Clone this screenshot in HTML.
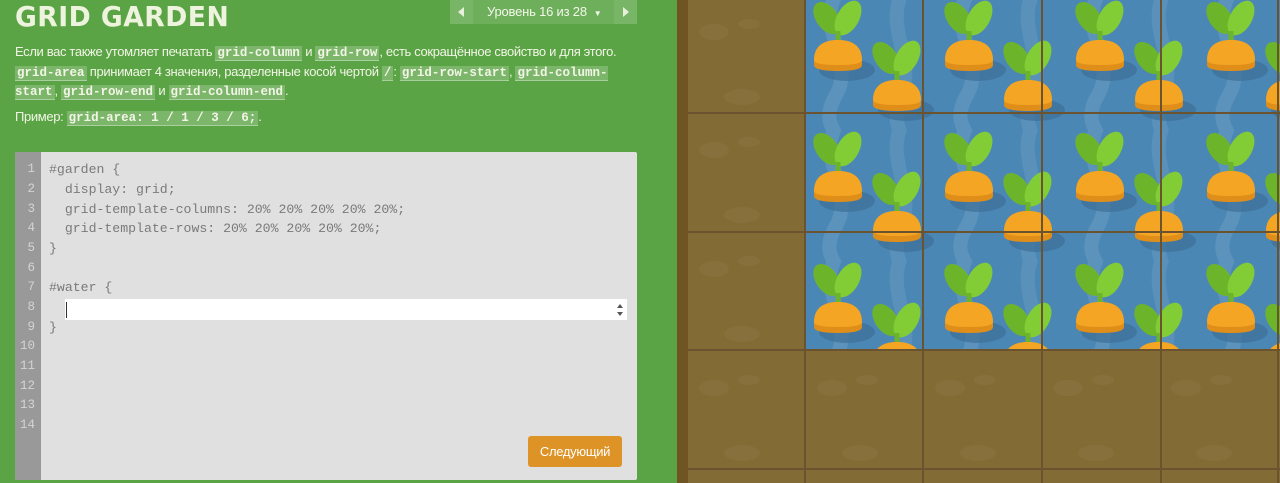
<!DOCTYPE html>
<html><head><meta charset="utf-8"><style>
*{margin:0;padding:0;box-sizing:border-box}
body{width:1280px;height:483px;overflow:hidden;background:#5aa445;position:relative;font-family:"Liberation Sans",sans-serif}
#left{position:absolute;left:0;top:0;width:677px;height:483px;background:#5aa445;color:#f2f5e6}
h1{position:absolute;left:15px;top:0px;font-size:28px;font-weight:bold;letter-spacing:0.5px;color:#eef3de;font-family:"DejaVu Sans","Liberation Sans",sans-serif;transform:scaleX(0.95);transform-origin:left}
#nav{position:absolute;left:450px;top:0;width:187px;height:24px;background:rgba(255,255,255,0.12);font-size:13px;color:#f4f7ea}
#nav .a{position:absolute;top:0;width:23px;height:24px;background:rgba(255,255,255,0.08)}
#nav .t{position:absolute;left:37px;top:4px;letter-spacing:-0.2px}
p{position:absolute;left:15px;font-size:13px;line-height:18.5px;letter-spacing:-0.35px;width:615px}
code{font-family:"Liberation Mono",monospace;font-weight:bold;font-size:12.5px;background:rgba(255,255,255,0.2);padding:0 2px;border-bottom:1px solid rgba(255,255,255,0.35);letter-spacing:0}
#ed{position:absolute;left:15px;top:152px;width:622px;height:328px;background:#e0e0e0;border-radius:2px;overflow:hidden}
#gut{position:absolute;left:0;top:0;width:26px;height:100%;background:#999}
.ln{position:absolute;font-family:"Liberation Mono",monospace;font-size:12.5px;color:#d4d4d4;width:20px;text-align:right;left:0}
.cd{position:absolute;left:34px;font-family:"Liberation Mono",monospace;font-size:13.2px;color:#7a7a7a;white-space:pre}
#inp{position:absolute;left:50px;top:147px;width:562px;height:21px;background:#fff}
#btn{position:absolute;left:513px;top:284px;width:94px;height:31px;background:#dd9326;border-radius:3px;color:#fff;font-size:13px;text-align:center;line-height:31px;letter-spacing:-0.3px}
</style></head><body>
<div id="left">
<h1>GRID GARDEN</h1>
<div id="nav"><div class="a" style="left:0"><svg width="23" height="24"><path d="M14 7 L8 12 L14 17Z" fill="#e8efda"/></svg></div><span class="t">Уровень 16 из 28 &nbsp;<span style="font-size:8px">▼</span></span><div class="a" style="right:0"><svg width="23" height="24"><path d="M9 7 L15 12 L9 17Z" fill="#e8efda"/></svg></div></div>
<p style="top:43px">Если вас также утомляет печатать <code>grid-column</code> и <code>grid-row</code>, есть сокращённое свойство и для этого. <code>grid-area</code> принимает 4 значения, разделенные косой чертой <code>/</code>: <code>grid-row-start</code>, <code>grid-column-start</code>, <code>grid-row-end</code> и <code>grid-column-end</code>.</p>
<p style="top:108px">Пример: <code>grid-area: 1 / 1 / 3 / 6;</code>.</p>
<div id="ed"><div id="gut"></div>
<div class="ln" style="top:10px">1</div><div class="ln" style="top:30px">2</div><div class="ln" style="top:50px">3</div><div class="ln" style="top:69px">4</div><div class="ln" style="top:89px">5</div><div class="ln" style="top:109px">6</div><div class="ln" style="top:128px">7</div><div class="ln" style="top:148px">8</div><div class="ln" style="top:168px">9</div><div class="ln" style="top:187px">10</div><div class="ln" style="top:207px">11</div><div class="ln" style="top:227px">12</div><div class="ln" style="top:246px">13</div><div class="ln" style="top:266px">14</div>
<div class="cd" style="top:10px">#garden {</div><div class="cd" style="top:30px">  display: grid;</div><div class="cd" style="top:50px">  grid-template-columns: 20% 20% 20% 20% 20%;</div><div class="cd" style="top:69px">  grid-template-rows: 20% 20% 20% 20% 20%;</div><div class="cd" style="top:89px">}</div><div class="cd" style="top:128px">#water {</div><div class="cd" style="top:168px">}</div>
<div id="inp"><div style="position:absolute;left:1px;top:3px;width:1px;height:16px;background:#333"></div><svg style="position:absolute;right:3px;top:4px" width="8" height="14"><path d="M1 5 L4 1 L7 5Z M1 9 L4 13 L7 9Z" fill="#555"/></svg></div>
<div id="btn">Следующий</div>
</div>
</div>
<svg style="position:absolute;left:677px;top:0" width="603" height="483">
<defs>
<g id="car">
<ellipse cx="9" cy="30" rx="28" ry="11" fill="#3d6f98" opacity="0.7"/>
<ellipse cx="-11" cy="-22" rx="11" ry="18" transform="rotate(-35 -11 -22)" fill="#6cb52b"/>
<ellipse cx="10" cy="-22" rx="11" ry="19" transform="rotate(30 10 -22)" fill="#82cc36"/>
<rect x="-2.5" y="-9" width="5" height="10" fill="#6cb52b"/>
<path d="M-24 22 C-24 5 -13 0 0 0 C13 0 24 5 24 22 L24 25 Q24 31 0 31 Q-24 31 -24 25Z" fill="#e08e1a"/>
<path d="M-24 20 C-24 5 -13 0 0 0 C13 0 24 5 24 20 Q24 25 0 25 Q-24 25 -24 20Z" fill="#f4a523"/>
</g>
<pattern id="wp" x="129" y="0" width="131" height="131" patternUnits="userSpaceOnUse">
<rect width="131" height="131" fill="#4b87b4"/>
<path d="M30 -5 C10 30 50 60 30 95 C15 120 30 131 30 136" stroke="#6a9dc4" stroke-width="14" fill="none" opacity="0.55"/>
<path d="M95 -5 C80 30 110 60 95 95 C85 120 95 131 95 136" stroke="#6a9dc4" stroke-width="14" fill="none" opacity="0.45"/>
<use href="#car" x="32" y="40"/>
<use href="#car" x="91" y="80"/>
<use href="#car" x="32" y="171"/>
<use href="#car" x="91" y="-51"/>
<use href="#car" x="-40" y="80"/>
<use href="#car" x="163" y="40"/>
</pattern>
</defs>
<rect x="0" y="0" width="11" height="483" fill="#6e5522"/>
<rect x="11" y="0" width="592" height="483" fill="#836b36"/>
<g fill="#8c7440" opacity="0.6">
<ellipse cx="37" cy="32" rx="15" ry="8"/><ellipse cx="72" cy="24" rx="11" ry="5"/><ellipse cx="65" cy="97" rx="18" ry="8"/>
<ellipse cx="37" cy="150" rx="15" ry="8"/><ellipse cx="72" cy="142" rx="11" ry="5"/><ellipse cx="65" cy="215" rx="18" ry="8"/>
<ellipse cx="37" cy="269" rx="15" ry="8"/><ellipse cx="72" cy="261" rx="11" ry="5"/><ellipse cx="65" cy="334" rx="18" ry="8"/>
<ellipse cx="37" cy="388" rx="15" ry="8"/><ellipse cx="72" cy="380" rx="11" ry="5"/><ellipse cx="65" cy="453" rx="18" ry="8"/>
<ellipse cx="155" cy="388" rx="15" ry="8"/><ellipse cx="190" cy="380" rx="11" ry="5"/><ellipse cx="183" cy="453" rx="18" ry="8"/>
<ellipse cx="273" cy="388" rx="15" ry="8"/><ellipse cx="308" cy="380" rx="11" ry="5"/><ellipse cx="301" cy="453" rx="18" ry="8"/>
<ellipse cx="391" cy="388" rx="15" ry="8"/><ellipse cx="426" cy="380" rx="11" ry="5"/><ellipse cx="419" cy="453" rx="18" ry="8"/>
<ellipse cx="509" cy="388" rx="15" ry="8"/><ellipse cx="544" cy="380" rx="11" ry="5"/><ellipse cx="537" cy="453" rx="18" ry="8"/>
</g>
<rect x="129" y="0" width="474" height="351" fill="url(#wp)"/>
<g fill="#6b5330">
<rect x="127" y="0" width="2" height="483"/><rect x="245" y="0" width="2" height="483"/><rect x="364" y="0" width="2" height="483"/><rect x="483" y="0" width="2" height="483"/><rect x="600" y="0" width="2" height="483"/>
<rect x="11" y="112" width="592" height="2"/><rect x="11" y="231" width="592" height="2"/><rect x="11" y="349" width="592" height="2"/><rect x="11" y="468" width="592" height="2"/>
</g>
</svg>
</body></html>
